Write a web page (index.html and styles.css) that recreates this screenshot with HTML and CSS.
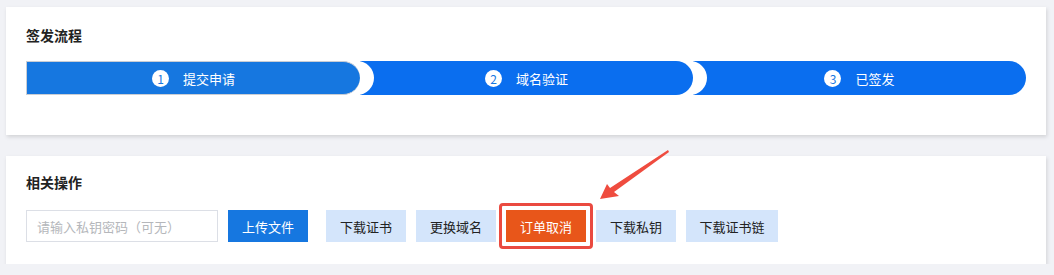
FILE: index.html
```html
<!DOCTYPE html>
<html lang="zh-CN">
<head>
  <meta charset="UTF-8">
  <meta name="viewport" content="width=device-width, initial-scale=1.0">
  <title>证书详情</title>
  <link rel="stylesheet" href="styles.css">
</head>
<body>
  <div class="card">
    <h3 class="card-title">签发流程</h3>
    <div class="steps">
      <div class="step step-done"><span class="num">1</span>提交申请</div>
      <div class="step"><span class="num">2</span>域名验证</div>
      <div class="step"><span class="num">3</span>已签发</div>
    </div>
  </div>

  <div class="card card-ops">
    <h3 class="card-title">相关操作</h3>
    <div class="ops">
      <input class="pwd" type="password" placeholder="请输入私钥密码（可无）">
      <button class="btn btn-primary">上传文件</button>
      <button class="btn btn-light btn-gap">下载证书</button>
      <button class="btn btn-light">更换域名</button>
      <!-- 강조 표시된 버튼 -->
      <span class="mark"><button class="btn btn-danger">订单取消</button></span>
      <button class="btn btn-light">下载私钥</button>
      <button class="btn btn-light btn-wide">下载证书链</button>
    </div>
    <svg class="arrow" width="80" height="60" viewBox="0 0 80 60">
      <polygon points="2,52 9,37 12,41 70,3 71,5 16,45 21,49" fill="#ef4c3f"/>
    </svg>
  </div>
</body>
</html>
```

FILE: styles.css
```css
body{
  margin: 0;
  background: #f1f2f6;
  font-family: "Noto Sans CJK SC", "Noto Sans", sans-serif;
  font-size: 13px;
  color: #222;
  padding: 7px 8px 0 6px;
}
.card{
  background: white;
  box-shadow: 1px 2px 4px rgba(0,0,0,0.13);
  padding: 20px 20px 40px;
  height: 68px;
}
.card-ops{
  position: relative;
  margin-top: 21px;
  height: auto;
  padding: 18px 20px 15px;
}
.card-title{
  margin: 0;
  font-size: 14px;
  font-weight: bold;
  line-height: 16px;
  color: #222;
}
.steps{
  display: flex;
  margin-top: 18px;
  height: 34px;
}
.step{
  flex: 1;
  display: flex;
  justify-content: center;
  align-items: center;
  background: #0a6eef;
  color: white;
  border-radius: 0 17px 17px 0;
  position: relative;
}
.step:nth-child(1){ z-index: 3; }
.step:nth-child(2){ z-index: 2; }
.step:nth-child(3){ z-index: 1; }
.step:not(:last-child){
  box-shadow: 14px 0 0 white;
}
.step-done{
  background: #1677e0;
  border: 1px solid #c9cdd4;
  border-right: none;
  box-sizing: border-box;
}
.num{
  width: 17px;
  height: 17px;
  border-radius: 50%;
  background: white;
  color: #1677e0;
  font-size: 12px;
  line-height: 17px;
  text-align: center;
  margin-right: 14px;
}
.ops{
  display: flex;
  align-items: center;
  margin-top: 13px;
  gap: 10px;
}
.pwd{
  width: 192px;
  height: 32px;
  box-sizing: border-box;
  border: 1px solid #dcdfe6;
  padding: 0 10px;
  font-family: inherit;
  font-size: 13px;
  outline: none;
}
.pwd::placeholder{
  color: #b5b7bb;
}
.btn{
  width: 80px;
  height: 32px;
  border: none;
  font-family: inherit;
  font-size: 13px;
  padding: 0;
  cursor: pointer;
}
.btn-primary{
  background: #1677e0;
  color: white;
}
.btn-light{
  background: #d4e5fb;
  color: #222;
}
.btn-gap{
  margin-left: 8px;
}
.btn-wide{
  width: 92px;
}
.btn-danger{
  background: #e8561a;
  color: white;
  display: block;
}
.mark{
  border: 3px solid #ea4a40;
  border-radius: 4px;
  padding: 4px;
  margin: 0 -7px;
}
.arrow{
  position: absolute;
  left: 592px;
  top: -9px;
}
```
